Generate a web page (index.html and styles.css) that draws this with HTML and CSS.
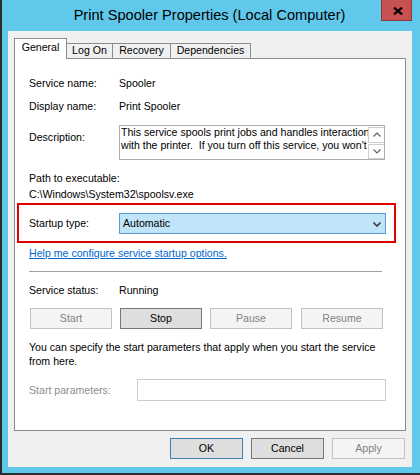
FILE: index.html
```html
<!DOCTYPE html>
<html>
<head>
<meta charset="utf-8">
<title>Print Spooler Properties (Local Computer)</title>
<link rel="stylesheet" href="styles.css">
</head>
<body>
<div class="window">
  <div class="titlebar">
    <span class="title">Print Spooler Properties (Local Computer)</span>
    <div class="close">
      <svg class="close-x" width="10" height="8" viewBox="0 0 10 8"><path d="M1 0.6 L9 7.4 M9 0.6 L1 7.4" stroke="#000" stroke-width="2.2" fill="none"/></svg>
    </div>
  </div>
  <div class="client">
    <div class="tabs">
      <div class="tab tab-general active">General</div>
      <div class="tab tab-logon">Log On</div>
      <div class="tab tab-recovery">Recovery</div>
      <div class="tab tab-deps">Dependencies</div>
    </div>
    <div class="pane">
      <div class="field">
        <span class="label">Service name:</span><span>Spooler</span>
      </div>
      <div class="field r-display">
        <span class="label">Display name:</span><span>Print Spooler</span>
      </div>
      <div class="desc-row">
        <span class="label desc-label">Description:</span>
        <div class="desc-box">
          <div class="desc-text">
            <div class="desc-line">This service spools print jobs and handles interaction</div>
            <div class="desc-line">with the printer.  If you turn off this service, you won't</div>
          </div>
          <div class="scrollbar">
            <div class="sb-btn"><svg width="8" height="5" viewBox="0 0 8 5"><path d="M0.5 4.5 L4 1 L7.5 4.5" stroke="#606060" stroke-width="1.2" fill="none"/></svg></div>
            <div class="sb-btn"><svg width="8" height="5" viewBox="0 0 8 5"><path d="M0.5 0.5 L4 4 L7.5 0.5" stroke="#606060" stroke-width="1.2" fill="none"/></svg></div>
          </div>
        </div>
      </div>
      <div class="plain r-path">Path to executable:</div>
      <div class="plain r-exe">C:\Windows\System32\spoolsv.exe</div>
      <div class="highlight">
        <span class="label">Startup type:</span>
        <div class="combo">
          <span>Automatic</span>
          <svg class="chev" width="8" height="5" viewBox="0 0 8 5"><path d="M0.5 0.6 L4 4 L7.5 0.6" stroke="#3a3a3a" stroke-width="1.6" fill="none"/></svg>
        </div>
      </div>
      <div class="plain r-link"><a class="link" href="#">Help me configure service startup options.</a></div>
      <div class="separator"></div>
      <div class="field r-status">
        <span class="label">Service status:</span><span>Running</span>
      </div>
      <div class="svc-buttons">
        <div class="btn disabled">Start</div>
        <div class="btn">Stop</div>
        <div class="btn disabled">Pause</div>
        <div class="btn disabled resume">Resume</div>
      </div>
      <p class="para">You can specify the start parameters that apply when you start the service from here.</p>
      <div class="params">
        <span class="label params-label">Start parameters:</span>
        <div class="input"></div>
      </div>
    </div>
    <div class="dialog-buttons">
      <div class="btn dlg default">OK</div>
      <div class="btn dlg">Cancel</div>
      <div class="btn dlg disabled">Apply</div>
    </div>
  </div>
</div>
</body>
</html>
```

FILE: styles.css
```css
* { box-sizing: border-box; }
html, body { margin: 0; padding: 0; }
body {
  font-family: "Liberation Sans", Arial, sans-serif;
  font-size: 10.6px;
  color: #000;
  background: #60c8ea;
}
.window {
  width: 420px;
  height: 475px;
  background: #60c8ea;
  border-left: 2px solid #2b2b2b;
  border-bottom: 2px solid #2b2b2b;
  position: relative;
  display: flex;
  flex-direction: column;
}
.titlebar {
  height: 31px;
  display: flex;
  align-items: center;
  justify-content: center;
  padding-right: 3px;
}
.title {
  font-size: 14.6px;
  line-height: 31px;
  color: #000;
  white-space: nowrap;
}
.close {
  position: absolute;
  top: 0;
  left: 379px;
  width: 31px;
  height: 21px;
  background: #c75050;
  border: 1px solid #8a3a3a;
  border-top: none;
  display: flex;
  align-items: center;
  justify-content: center;
}
.close-x { margin: 2px 0 0 2px; }
.client {
  margin-left: 6px;
  width: 404px;
  height: 436px;
  background: #f0f0f0;
  padding: 7px 6px 0 6px;
  display: flex;
  flex-direction: column;
}
.tabs {
  display: flex;
  align-items: flex-end;
  height: 21px;
  margin-bottom: -1px;
  position: relative;
  z-index: 1;
}
.tab {
  height: 15px;
  margin-bottom: 1px;
  margin-left: -1px;
  border: 1px solid #898c95;
  border-bottom: none;
  background: #f0f0f0;
  text-align: center;
  line-height: 13px;
  white-space: nowrap;
}
.tab:first-child { margin-left: 0; }
.tab.active {
  height: 21px;
  margin-bottom: 0;
  padding-top: 2px;
  background: #fff;
  position: relative;
  z-index: 2;
}
.tab-general { width: 53px; }
.tab-logon { width: 47px; }
.tab-recovery { width: 59px; }
.tab-deps { width: 81px; }
.pane {
  height: 373px;
  border: 1px solid #898c95;
  background: #fff;
  padding: 17px 0 0 14px;
}
.field {
  display: flex;
  height: 14px;
  line-height: 14px;
  white-space: nowrap;
}
.label { width: 90px; flex: none; }
.r-display { margin-top: 9px; }
.desc-row {
  display: flex;
  align-items: flex-start;
  margin-top: 12px;
  line-height: 14px;
}
.desc-label { margin-top: 5px; }
.desc-box {
  width: 266px;
  height: 35px;
  border: 1px solid #abadb3;
  display: flex;
}
.desc-text {
  flex: 1;
  height: 26px;
  overflow: hidden;
  padding-left: 1px;
  line-height: 13px;
}
.desc-line { white-space: pre; overflow: hidden; }
.scrollbar {
  width: 16px;
  display: flex;
  flex-direction: column;
  gap: 1px;
  padding-top: 1px;
}
.sb-btn {
  flex: 1;
  border: 1px solid #cfcfcf;
  border-right: none;
  display: flex;
  align-items: center;
  justify-content: center;
}
.plain { line-height: 14px; height: 14px; white-space: nowrap; }
.r-path { margin-top: 11px; }
.r-exe { margin-top: 2px; }
.highlight {
  margin: 2px 0 0 -12px;
  width: 379px;
  height: 40px;
  border: 2px solid #e50000;
  padding: 8px 0 0 10px;
  display: flex;
  align-items: flex-start;
  line-height: 14px;
}
.highlight .label { margin-top: 3px; }
.combo {
  width: 267px;
  height: 21px;
  border: 1px solid #5b9bd5;
  background: #c0e4f8;
  padding: 0 4px 0 3px;
  line-height: 19px;
  display: flex;
  align-items: center;
  justify-content: space-between;
}
.chev { margin-top: 1px; }
.r-link { margin-top: 3px; }
.link { color: #0066cc; text-decoration: underline; }
.separator {
  margin-top: 11px;
  width: 353px;
  height: 1px;
  background: #a0a0a0;
}
.r-status { margin-top: 11px; }
.svc-buttons {
  display: flex;
  gap: 8px;
  margin: 11px 0 0 1px;
}
.btn {
  width: 82px;
  height: 21px;
  border: 1px solid #777;
  background: #dedede;
  text-align: center;
  line-height: 19px;
  white-space: nowrap;
}
.btn.disabled {
  background: #f4f4f4;
  border-color: #c2c2c2;
  color: #838383;
}
.btn.resume { margin-left: 1px; }
.para {
  margin: 11px 0 0 0;
  width: 362px;
  line-height: 14px;
}
.params {
  margin-top: 11px;
  display: flex;
  align-items: center;
  height: 22px;
  line-height: 14px;
}
.params-label { width: 108px; color: #8d8d8d; }
.input {
  width: 249px;
  height: 22px;
  border: 1px solid #cccccc;
  background: #fff;
}
.dialog-buttons {
  display: flex;
  justify-content: flex-end;
  gap: 8px;
  margin-top: 7px;
  padding-right: 1px;
}
.btn.dlg { width: 73px; }
.btn.default { border-color: #3c7fb1; }
```
